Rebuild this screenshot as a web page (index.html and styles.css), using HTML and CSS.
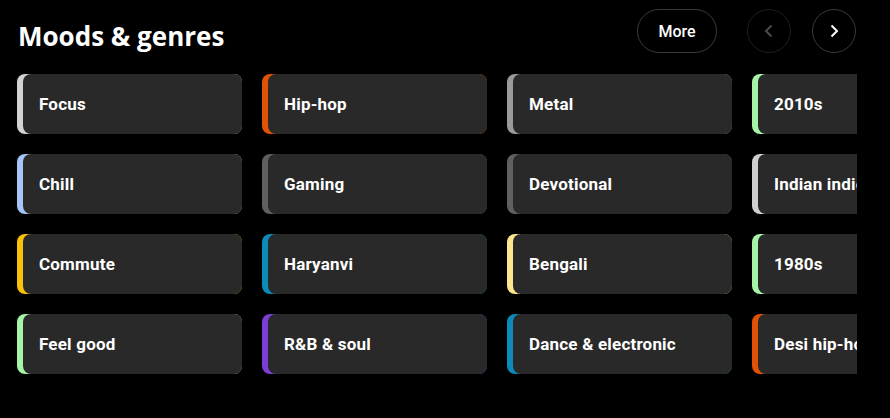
FILE: index.html
```html
<!DOCTYPE html>
<html lang="en">
<head>
<meta charset="utf-8">
<title>Moods &amp; genres</title>
<link rel="stylesheet" href="styles.css">
</head>
<body>
<section class="shelf">
  <header class="shelf-header">
    <h2 class="shelf-title">Moods &amp; genres</h2>
    <div class="shelf-actions">
      <button class="btn-more">More</button>
      <button class="btn-nav disabled" aria-label="Previous">
        <svg viewBox="0 0 24 24" width="24" height="24"><path d="M14.5 6.5 9 12l5.5 5.5" fill="none" stroke="currentColor" stroke-width="2"/></svg>
      </button>
      <button class="btn-nav" aria-label="Next">
        <svg viewBox="0 0 24 24" width="24" height="24"><path d="M9.5 6.5 15 12l-5.5 5.5" fill="none" stroke="currentColor" stroke-width="2"/></svg>
      </button>
    </div>
  </header>
  <div class="chips">
    <a class="chip c-focus"><span class="chip-body">Focus</span></a>
    <a class="chip c-chill"><span class="chip-body">Chill</span></a>
    <a class="chip c-commute"><span class="chip-body">Commute</span></a>
    <a class="chip c-feel"><span class="chip-body">Feel good</span></a>
    <a class="chip c-hiphop"><span class="chip-body">Hip-hop</span></a>
    <a class="chip c-gaming"><span class="chip-body">Gaming</span></a>
    <a class="chip c-haryanvi"><span class="chip-body">Haryanvi</span></a>
    <a class="chip c-rnb"><span class="chip-body">R&amp;B &amp; soul</span></a>
    <a class="chip c-metal"><span class="chip-body">Metal</span></a>
    <a class="chip c-devotional"><span class="chip-body">Devotional</span></a>
    <a class="chip c-bengali"><span class="chip-body">Bengali</span></a>
    <a class="chip c-dance"><span class="chip-body">Dance &amp; electronic</span></a>
    <a class="chip c-2010"><span class="chip-body">2010s</span></a>
    <a class="chip c-indie"><span class="chip-body">Indian indie</span></a>
    <a class="chip c-1980"><span class="chip-body">1980s</span></a>
    <a class="chip c-desi"><span class="chip-body">Desi hip-hop</span></a>
  </div>
</section>
</body>
</html>
```
FILE: styles.css
```css
html, body {
  margin: 0;
  background: #000;
  color: #fff;
}
body {
  font-family: Roboto, "Liberation Sans", sans-serif;
}
.shelf {
  width: 840px;
  padding: 9px 0 0 17px;
}
.shelf-header {
  display: flex;
  justify-content: space-between;
  align-items: flex-start;
  height: 65px;
}
.shelf-title {
  margin: 0;
  padding: 9px 0 0 1px;
  font-family: "Open Sans", sans-serif;
  font-weight: 700;
  font-size: 26px;
  line-height: 36px;
}
.shelf-actions {
  display: flex;
  align-items: center;
  margin-right: 1px;
}
.btn-more {
  height: 44px;
  width: 80px;
  border-radius: 22px;
  border: 1px solid #3a3a3a;
  background: transparent;
  color: #fff;
  font-family: Roboto, sans-serif;
  font-weight: 500;
  font-size: 16px;
  margin-right: 30px;
  padding: 0;
}
.btn-nav {
  width: 44px;
  height: 44px;
  border-radius: 50%;
  border: 1px solid #3a3a3a;
  background: transparent;
  color: #fff;
  display: flex;
  align-items: center;
  justify-content: center;
  padding: 0;
  margin-left: 21px;
}
.btn-nav.disabled {
  border-color: #1f1f1f;
  color: #4a4a4a;
  margin-left: 0;
}
.chips {
  display: grid;
  grid-auto-flow: column;
  grid-template-rows: repeat(4, 60px);
  grid-auto-columns: 225px;
  column-gap: 20px;
  row-gap: 20px;
  overflow: hidden;
}
.chip {
  display: flex;
  border-radius: 8px;
  background: var(--accent);
}
.chip-body {
  flex: 1;
  margin-left: 6px;
  background: #292929;
  border-radius: 8px;
  display: flex;
  align-items: center;
  padding-left: 16px;
  font-size: 17px;
  font-weight: 700;
  letter-spacing: 0.2px;
  white-space: nowrap;
  overflow: hidden;
}
.c-focus { --accent: #d2d2d2; }
.c-chill { --accent: #a7c3f7; }
.c-commute { --accent: #f8c10a; }
.c-feel { --accent: #a8f4a6; }
.c-hiphop { --accent: #e25205; }
.c-gaming { --accent: #5f5f5f; }
.c-haryanvi { --accent: #0a8bb8; }
.c-rnb { --accent: #7b3fd8; }
.c-metal { --accent: #9a9a9a; }
.c-devotional { --accent: #606060; }
.c-bengali { --accent: #fde68a; }
.c-dance { --accent: #0a8bb8; }
.c-2010 { --accent: #a8f4a6; }
.c-indie { --accent: #cfcfcf; }
.c-1980 { --accent: #a8f4a6; }
.c-desi { --accent: #e25205; }
```
